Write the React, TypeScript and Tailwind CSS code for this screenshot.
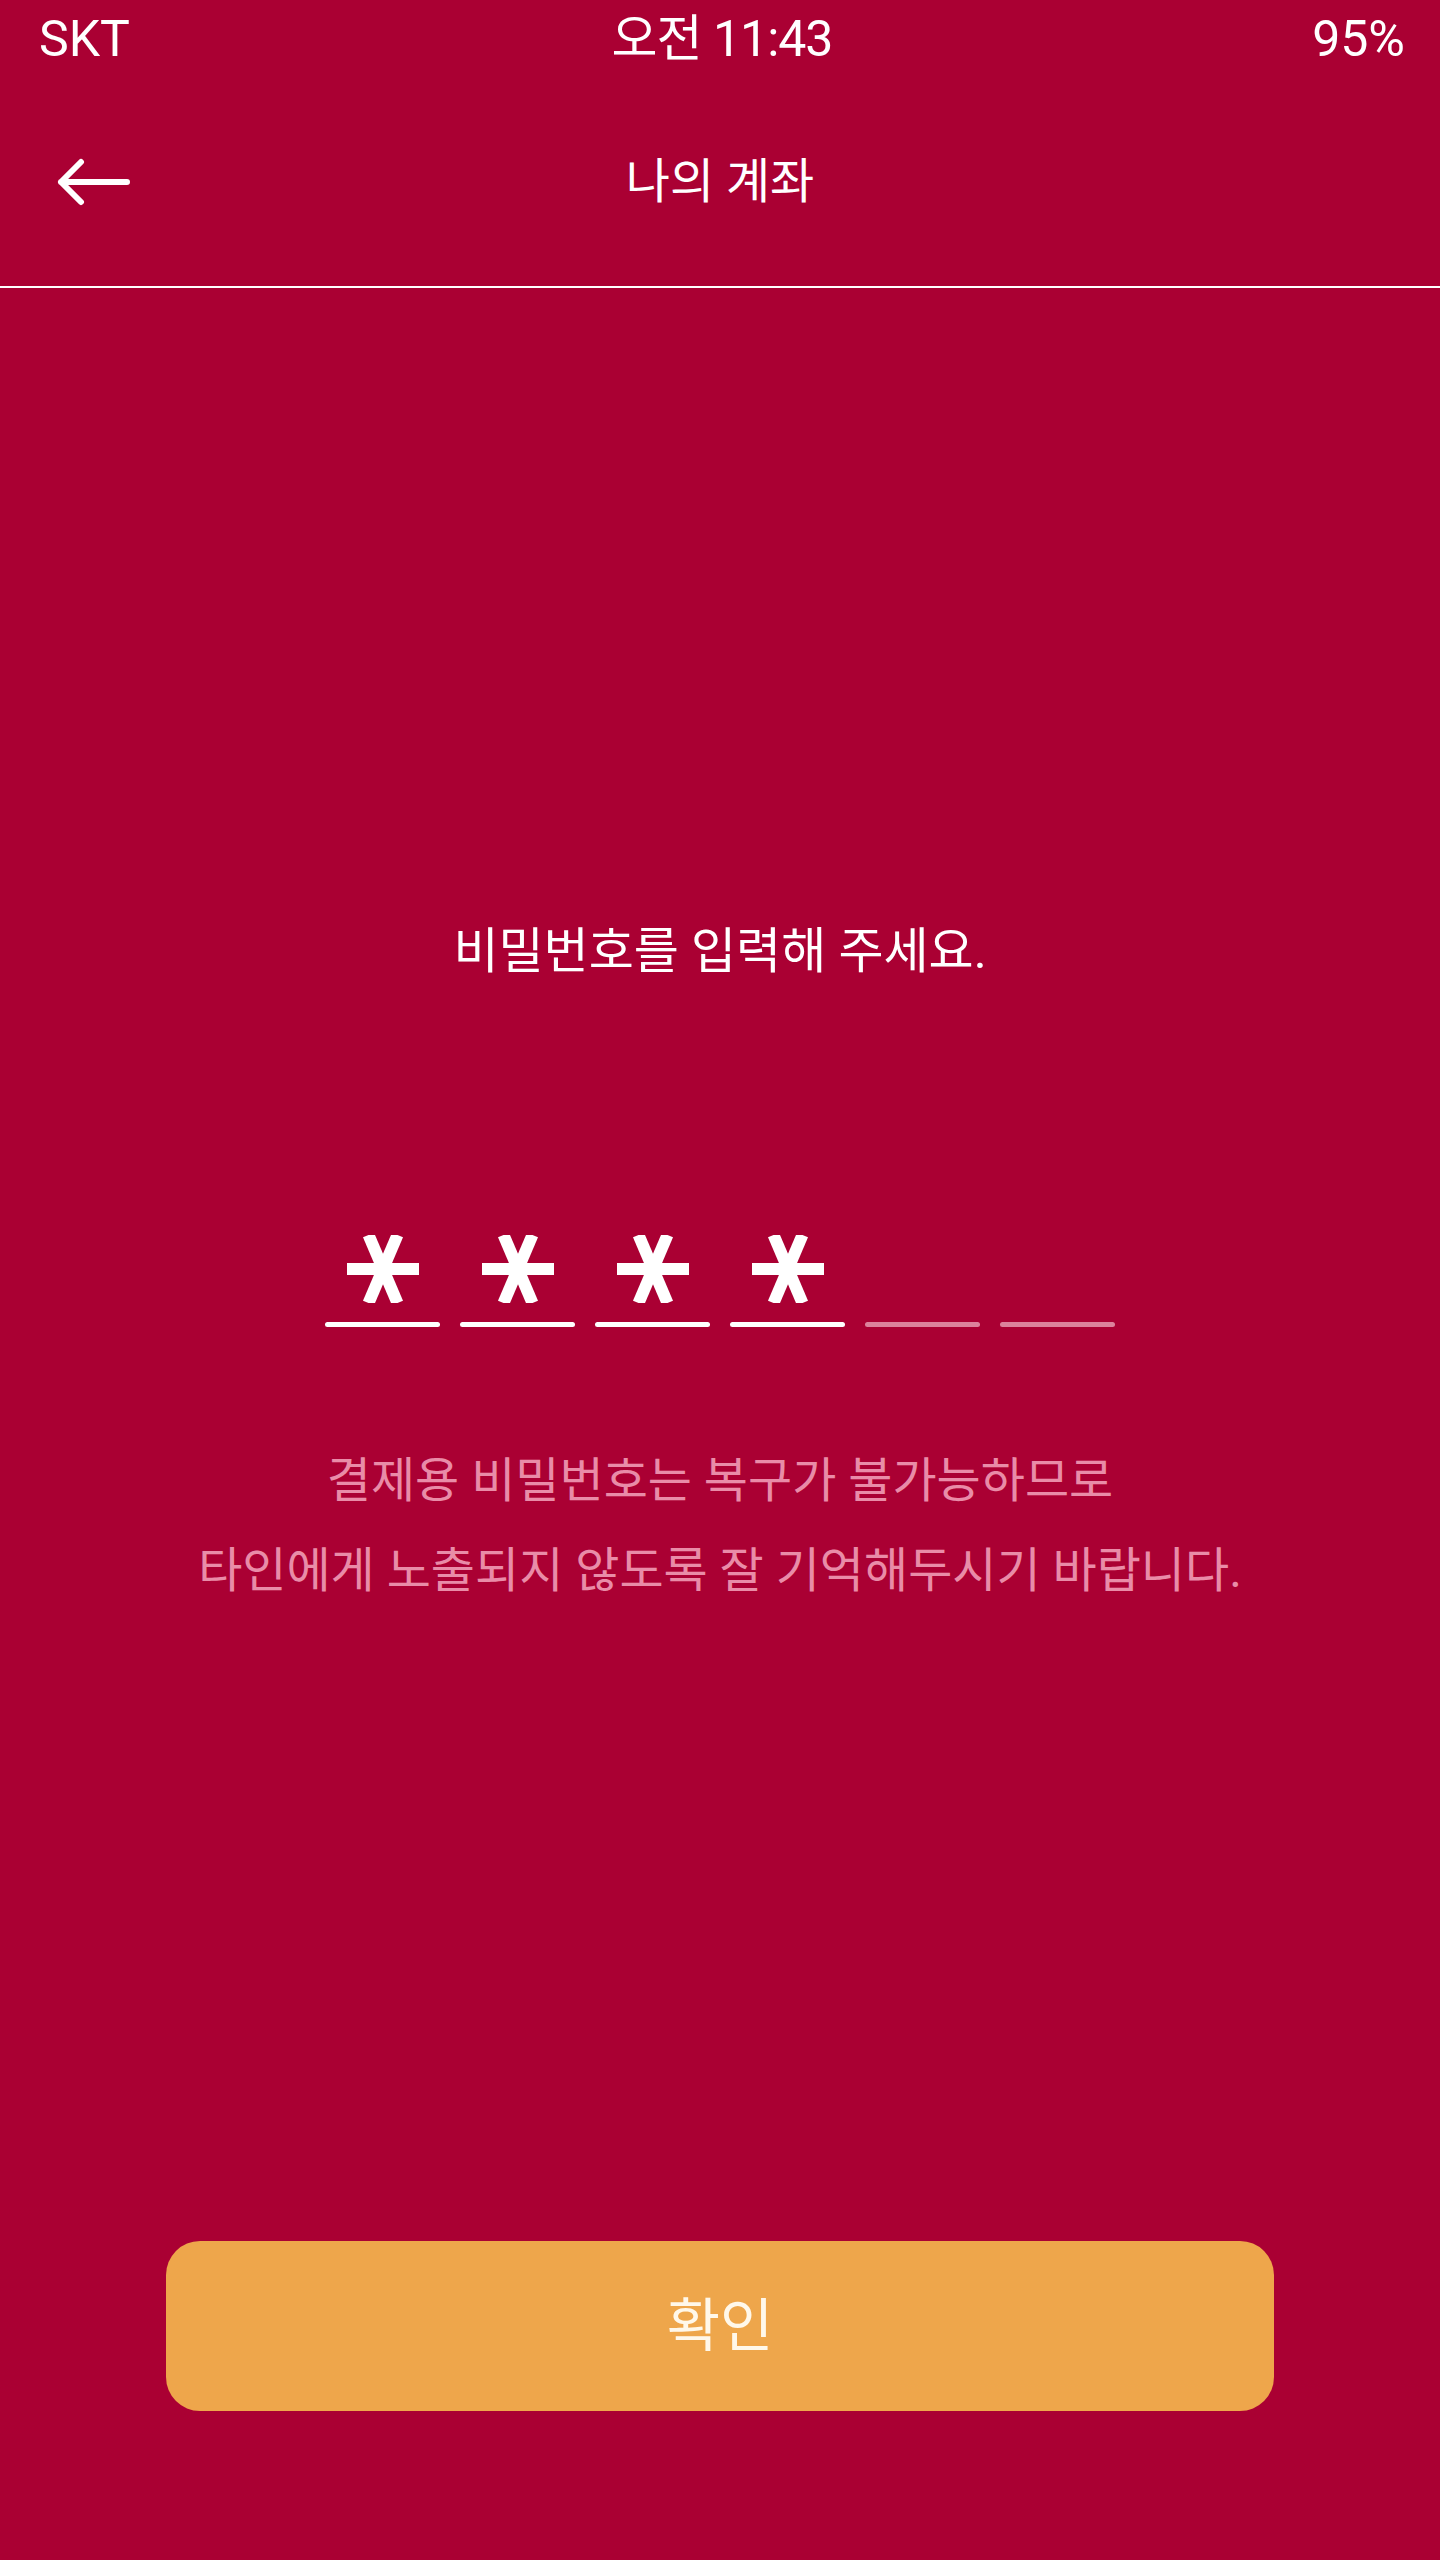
const Asterisk = () => (
  <svg width="72" height="68" viewBox="0 0 72 68" fill="none">
    <g stroke="#ffffff" strokeWidth="12">
      <line x1="0" y1="34" x2="72" y2="34" />
      <line x1="21.5" y1="0" x2="50.5" y2="68" />
      <line x1="50.5" y1="0" x2="21.5" y2="68" />
    </g>
  </svg>
);

const ArrowLeft = () => (
  <svg width="74" height="48" viewBox="0 0 74 48" fill="none">
    <path
      d="M24 4 L4 24 L24 44 M4 24 H70"
      stroke="#ffffff"
      strokeWidth="6"
      strokeLinecap="round"
      strokeLinejoin="round"
    />
  </svg>
);

const PinSlot = ({ filled }: { filled: boolean }) => (
  <div className="flex w-[115px] flex-col items-center">
    <div className="flex h-[68px] items-center justify-center">{filled && <Asterisk />}</div>
    <div
      className={`mt-[19px] h-[5px] w-full rounded-full ${filled ? 'bg-white' : 'bg-[#dc829c]'}`}
    />
  </div>
);

const App = () => {
  const digits = 4;
  return (
    <div
      className="flex h-[2560px] w-[1440px] flex-col bg-[#aa0033] text-white"
      style={{ fontFamily: 'Roboto, "Noto Sans CJK KR", sans-serif' }}
    >
      {/* status bar */}
      <div className="grid h-[78px] grid-cols-3 items-center pl-[39px] pr-[35px] text-[50px] leading-none">
        <span>SKT</span>
        <span className="text-center tracking-[-1px]">오전 11:43</span>
        <span className="text-right">95%</span>
      </div>

      {/* header */}
      <div className="grid h-[208px] grid-cols-[1fr_auto_1fr] items-center">
        <div className="pl-[57px]">
          <ArrowLeft />
        </div>
        <h1 className="text-[48px] font-normal leading-none">나의 계좌</h1>
        <div />
      </div>
      <div className="h-[2px] bg-white" />

      <p className="mt-[634px] text-center text-[49px] leading-[60px]">비밀번호를 입력해 주세요.</p>

      <div className="mt-[253px] flex justify-center gap-[20px]">
        {Array.from({ length: 6 }).map((_, i) => (
          <PinSlot key={i} filled={i < digits} />
        ))}
      </div>

      <div className="mt-[109px] text-center text-[48px] leading-[90px] text-[#e98ca8]">
        <p>결제용 비밀번호는 복구가 불가능하므로</p>
        <p>타인에게 노출되지 않도록 잘 기억해두시기 바랍니다.</p>
      </div>

      <div className="flex-1" />

      <div className="mb-[149px] px-[166px]">
        <button className="flex h-[170px] w-full items-center justify-center rounded-[34px] bg-[#eea64b] text-[58px] text-[#fff8ea]">
          확인
        </button>
      </div>
    </div>
  );
};

export default App;
